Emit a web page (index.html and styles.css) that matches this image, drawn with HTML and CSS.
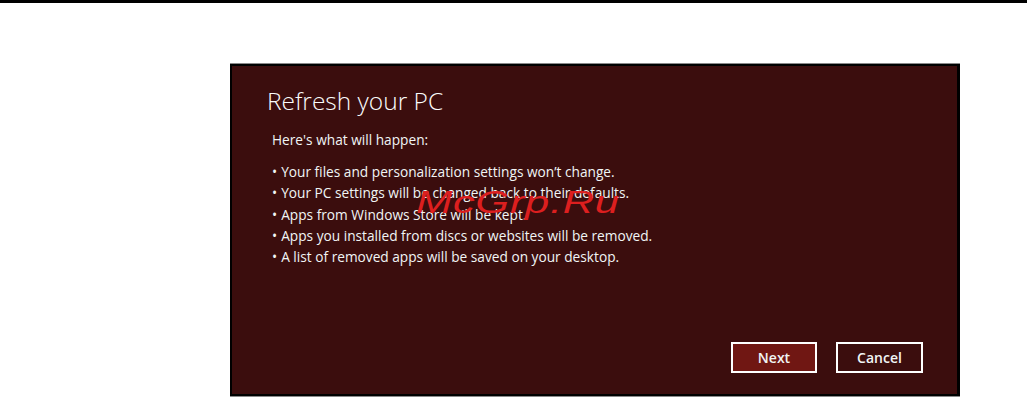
FILE: index.html
```html
<!DOCTYPE html>
<html lang="en">
<head>
    <meta charset="UTF-8">
    <meta name="viewport" content="width=device-width, initial-scale=1.0">
    <title>Refresh your PC</title>
    <link rel="stylesheet" href="styles.css">
</head>
<body>
    <div class="top-bar"></div>
    <main class="page">
        <section class="dialog">
            <h1 class="dialog-title">Refresh your PC</h1>
            <p class="dialog-intro">Here's what will happen:</p>
            <ul class="dialog-list">
                <li>Your files and personalization settings won’t change.</li>
                <li>Your PC settings will be changed back to their defaults.</li>
                <li>Apps from Windows Store will be kept.</li>
                <li>Apps you installed from discs or websites will be removed.</li>
                <li>A list of removed apps will be saved on your desktop.</li>
            </ul>
            <div class="dialog-buttons">
                <button class="btn btn-primary">Next</button>
                <button class="btn">Cancel</button>
            </div>
            <span class="watermark">McGrp.Ru</span>
        </section>
    </main>
</body>
</html>
```

FILE: styles.css
```css
body {
    margin: 0;
    padding: 0;
    background-color: #fff;
    font-family: "Open Sans", "Noto Sans", sans-serif;
}
.top-bar {
    height: 3px;
    background-color: #000;
}
.page {
    padding: 60px 0 0 230px;
}
.dialog {
    position: relative;
    box-sizing: border-box;
    width: 730px;
    height: 334px;
    display: flex;
    flex-direction: column;
    background-color: #3b0d0d;
    border-top: 1px solid #8a8a8a;
    border-bottom: 1px solid #8a8a8a;
    box-shadow: inset 2px 2px 0 #000, inset -3px -2px 0 #000;
    padding: 0 37px 0 37px;
    color: #f1f5f5;
}
.dialog-title {
    margin: 19px 0 0 0;
    font-size: 24.5px;
    font-weight: 300;
    line-height: 36px;
    color: #fafcfc;
}
.dialog-intro {
    margin: 10px 0 0 5px;
    font-size: 13.7px;
    line-height: 21px;
}
.dialog-list {
    margin: 11px 0 0 5px;
    padding: 0;
    list-style: none;
    font-size: 13.7px;
    line-height: 21.3px;
}
.dialog-list li::before {
    content: "\2022";
    margin-right: 4px;
}
.dialog-buttons {
    margin-top: auto;
    margin-bottom: 23px;
    display: flex;
    justify-content: flex-end;
    gap: 19px;
}
.btn {
    box-sizing: border-box;
    width: 87px;
    height: 31px;
    border: 2px solid #fff;
    background-color: #3b0d0d;
    color: #f1f5f5;
    font-family: "Open Sans", "Noto Sans", sans-serif;
    font-size: 14px;
    font-weight: 600;
    padding: 0;
}
.btn-primary {
    width: 86px;
    background-color: #701713;
}
.watermark {
    position: absolute;
    left: 186px;
    top: 120px;
    font-family: "Liberation Sans", Arial, sans-serif;
    font-size: 32px;
    font-style: italic;
    color: #dc1f1f;
    transform: scaleX(1.36);
    transform-origin: left top;
    letter-spacing: 0.5px;
}
```
